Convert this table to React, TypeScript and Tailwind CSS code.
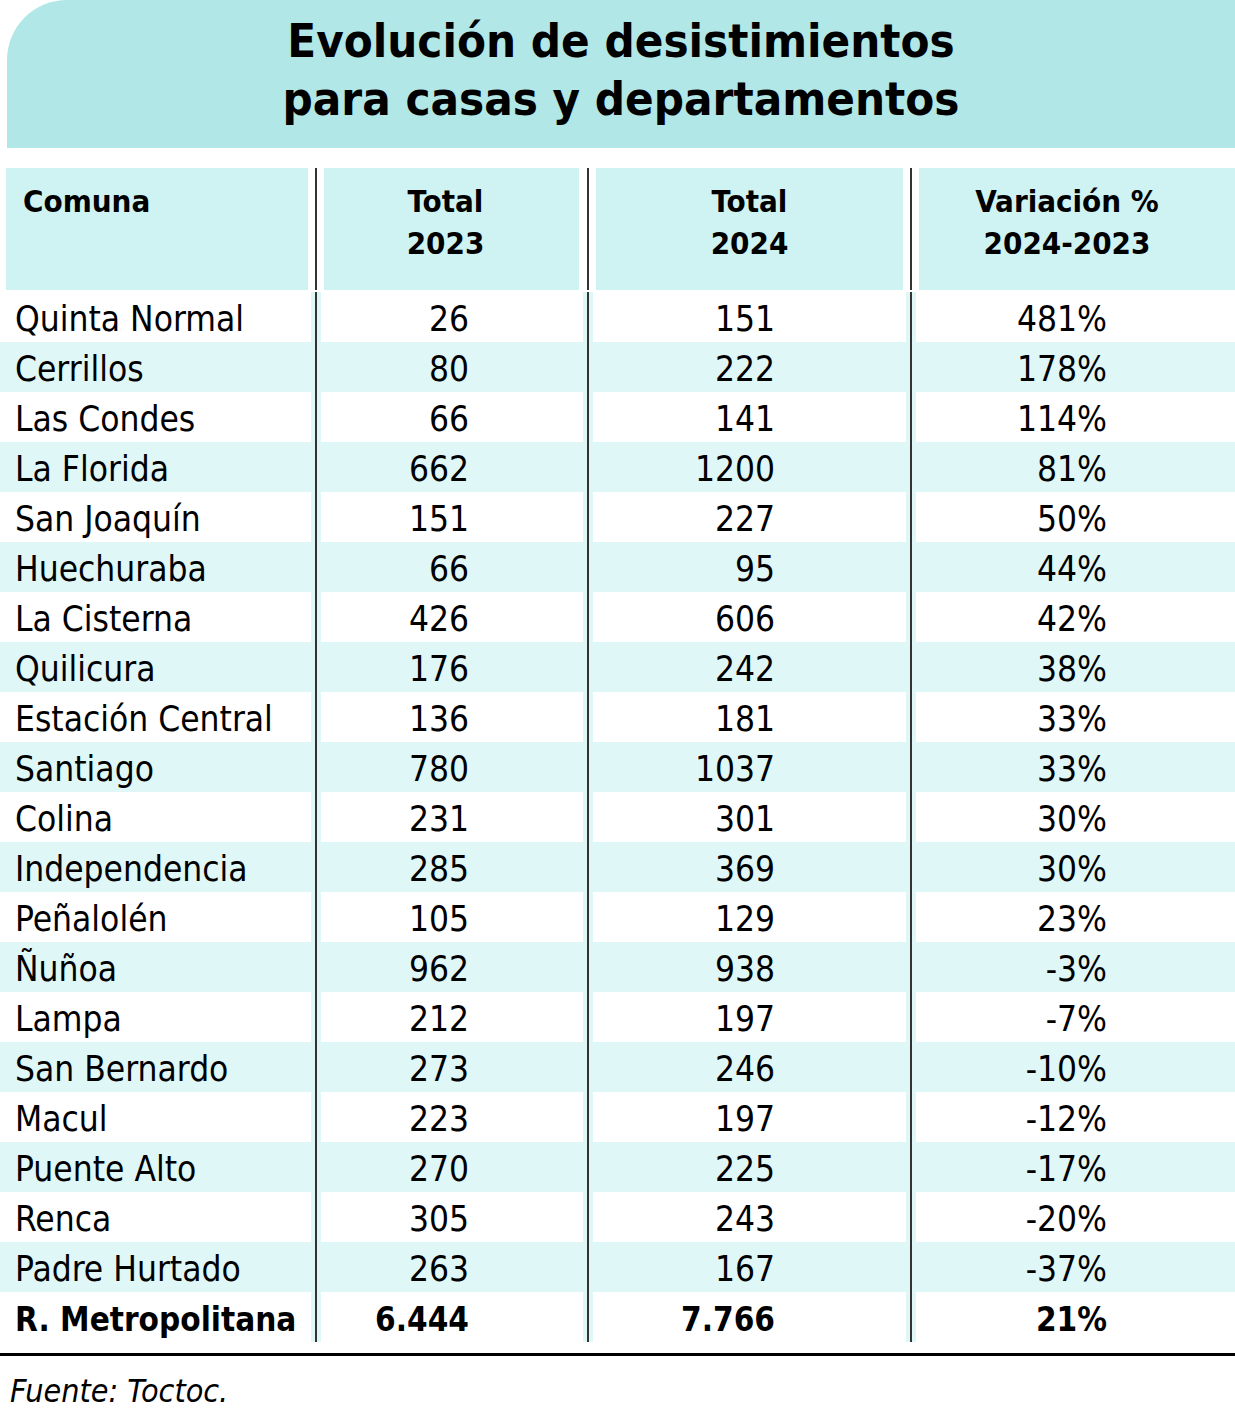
const rows: [string, string, string, string][] = [
  ['Quinta Normal', '26', '151', '481%'],
  ['Cerrillos', '80', '222', '178%'],
  ['Las Condes', '66', '141', '114%'],
  ['La Florida', '662', '1200', '81%'],
  ['San Joaquín', '151', '227', '50%'],
  ['Huechuraba', '66', '95', '44%'],
  ['La Cisterna', '426', '606', '42%'],
  ['Quilicura', '176', '242', '38%'],
  ['Estación Central', '136', '181', '33%'],
  ['Santiago', '780', '1037', '33%'],
  ['Colina', '231', '301', '30%'],
  ['Independencia', '285', '369', '30%'],
  ['Peñalolén', '105', '129', '23%'],
  ['Ñuñoa', '962', '938', '-3%'],
  ['Lampa', '212', '197', '-7%'],
  ['San Bernardo', '273', '246', '-10%'],
  ['Macul', '223', '197', '-12%'],
  ['Puente Alto', '270', '225', '-17%'],
  ['Renca', '305', '243', '-20%'],
  ['Padre Hurtado', '263', '167', '-37%'],
]

const font = { fontFamily: '"Liberation Sans Narrow", "DejaVu Sans Condensed", "Liberation Sans", sans-serif' }

function Divider({ w = 'w-[16px]', strip }: { w?: string; strip?: boolean }) {
  return (
    <div className={`${w} flex justify-center`}>
      <div className={`flex justify-center ${strip ? 'w-[10px] bg-[#e0f7f8]' : 'w-[2px]'}`}>
        <div className="w-[2px] bg-[#333]" />
      </div>
    </div>
  )
}

function Row({ cells, striped, bold }: { cells: [string, string, string, string]; striped: boolean; bold?: boolean }) {
  const bg = striped ? 'bg-[#e0f7f8]' : 'bg-white'
  const text = bold ? 'font-bold text-[33px]' : 'font-normal text-[35px]'
  return (
    <div className={`flex h-[50px] ${bg} leading-none text-black ${text}`}>
      <div className="w-[308px] flex items-center pl-[15px] pt-[5px] whitespace-nowrap">{cells[0]}</div>
      <Divider strip={!striped} />
      <div className="w-[255px] flex items-center justify-end pr-[110px] pt-[5px]">{cells[1]}</div>
      <Divider w="w-[17px]" strip={!striped} />
      <div className="w-[307px] flex items-center justify-end pr-[128px] pt-[5px]">{cells[2]}</div>
      <Divider strip={!striped} />
      <div className="flex-1 flex items-center justify-end pr-[128px] pt-[5px]">{cells[3]}</div>
    </div>
  )
}

export default function App() {
  return (
    <div className="w-[1235px] h-[1424px] bg-white overflow-hidden" style={font}>
      <div className="ml-[7px] h-[148px] bg-[#b1e7e7] rounded-tl-[60px] flex flex-col items-center justify-center pb-[8px]">
        <h1 className="text-[47px] font-bold leading-[58px] text-black text-center">
          Evolución de desistimientos
          <br />
          para casas y departamentos
        </h1>
      </div>

      <div className="flex h-[122px] mt-[20px] text-[31px] font-bold leading-[42px] text-black">
        <div className="ml-[6px] w-[302px] bg-[#cff2f2] pl-[17px] pt-[12px]">Comuna</div>
        <Divider />
        <div className="w-[255px] bg-[#cff2f2] pt-[12px] text-center pr-[12px]">
          Total
          <br />
          2023
        </div>
        <Divider w="w-[17px]" />
        <div className="w-[307px] bg-[#cff2f2] pt-[12px] text-center">
          Total
          <br />
          2024
        </div>
        <Divider />
        <div className="flex-1 bg-[#cff2f2] pt-[12px] text-center pr-[20px]">
          Variación %
          <br />
          2024-2023
        </div>
      </div>

      <div className="mt-[2px]">
        {rows.map((r, i) => (
          <Row key={r[0]} cells={r} striped={i % 2 === 1} />
        ))}
        <Row cells={['R. Metropolitana', '6.444', '7.766', '21%']} striped={false} bold />
      </div>

      <div className="mt-[11px] h-[3px] bg-black" />
      <p className="mt-[19px] pl-[10px] text-[32px] italic leading-none text-black">Fuente: Toctoc.</p>
    </div>
  )
}
